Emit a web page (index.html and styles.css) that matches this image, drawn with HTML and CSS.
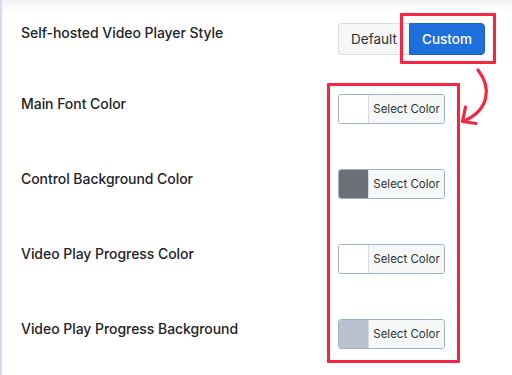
FILE: index.html
```html
<!DOCTYPE html>
<html>
<head>
<meta charset="utf-8">
<link rel="stylesheet" href="styles.css">
</head>
<body>
<div class="page">
  <div class="rows">
    <div class="row first">
      <div class="label">Self-hosted Video Player Style</div>
      <div class="control">
        <div class="btn-group">
          <span class="btn default">Default</span>
          <span class="btn custom">Custom</span>
        </div>
      </div>
    </div>
    <div class="row">
      <div class="label">Main Font Color</div>
      <div class="control">
        <div class="picker"><span class="swatch" style="background:#ffffff"></span><span class="pick-text">Select Color</span></div>
      </div>
    </div>
    <div class="row">
      <div class="label">Control Background Color</div>
      <div class="control">
        <div class="picker"><span class="swatch" style="background:#6b7079"></span><span class="pick-text">Select Color</span></div>
      </div>
    </div>
    <div class="row">
      <div class="label">Video Play Progress Color</div>
      <div class="control">
        <div class="picker"><span class="swatch" style="background:#ffffff"></span><span class="pick-text">Select Color</span></div>
      </div>
    </div>
    <div class="row">
      <div class="label">Video Play Progress Background</div>
      <div class="control">
        <div class="picker"><span class="swatch" style="background:#b8c2d1"></span><span class="pick-text">Select Color</span></div>
      </div>
    </div>
  </div>
  <div class="hl hl-custom"></div>
  <div class="hl hl-pickers"></div>
  <svg class="arrow" width="512" height="375" viewBox="0 0 512 375">
    <path d="M478 70 C492 88 489 110 464 121" fill="none" stroke="#f7253f" stroke-width="3.2" stroke-linecap="round"/>
    <path d="M465.5 107 L462.5 121.5 L476 123.5" fill="none" stroke="#f7253f" stroke-width="3.2" stroke-linecap="round" stroke-linejoin="round"/>
  </svg>
</div>
</body>
</html>
```
FILE: styles.css
```css
* { box-sizing: border-box; }
html, body { margin: 0; padding: 0; background: #fff; }
body { font-family: Inter, "Noto Sans", "Liberation Sans", sans-serif; }
.page {
  position: relative;
  width: 512px;
  height: 375px;
  overflow: hidden;
  border-left: 2px solid #ddd5ef;
  background: linear-gradient(to bottom, #f1f1f1 0px, #fbfbfb 8px, #ffffff 14px);
}
.rows {
  display: flex;
  flex-direction: column;
  padding-top: 23px;
  padding-left: 19px;
}
.row {
  display: flex;
  align-items: flex-start;
  height: 75px;
}
.row.first { height: 71px; }
.label {
  width: 317px;
  font-size: 14px;
  line-height: 20px;
  font-weight: 500;
  color: #1d2327;
  letter-spacing: -0.05px;
}
.control { display: flex; }
.row.first .control { margin-top: 0; }
.btn-group { display: flex; }
.btn {
  display: flex;
  align-items: center;
  justify-content: center;
  height: 32px;
  font-size: 13.5px;
}
.btn.default {
  width: 71px;
  background: #f6f7f7;
  border: 1px solid #dcdcde;
  border-right: none;
  border-radius: 4px 0 0 4px;
  color: #2c3338;
}
.btn.custom {
  width: 76px;
  background: #1e6fdc;
  border: 1px solid #1a64c8;
  border-radius: 0 4px 4px 0;
  color: #fff;
  font-weight: 500;
}
.picker {
  display: flex;
  height: 30px;
  width: 107px;
  border: 1px solid #9fb0cc;
  border-radius: 3px;
  overflow: hidden;
}
.swatch {
  width: 30px;
  border-right: 1px solid #d6dae0;
}
.pick-text {
  flex: 1;
  display: flex;
  align-items: center;
  justify-content: center;
  background: #f6f7f7;
  font-size: 11.5px;
  color: #2c3338;
}
.hl {
  position: absolute;
  border: 3px solid #f7253f;
  border-radius: 1px;
}
.hl-custom { left: 398px; top: 13px; width: 96px; height: 51px; }
.hl-pickers { left: 325px; top: 83px; width: 133px; height: 280px; }
.arrow { position: absolute; left: -2px; top: 0; }
```
